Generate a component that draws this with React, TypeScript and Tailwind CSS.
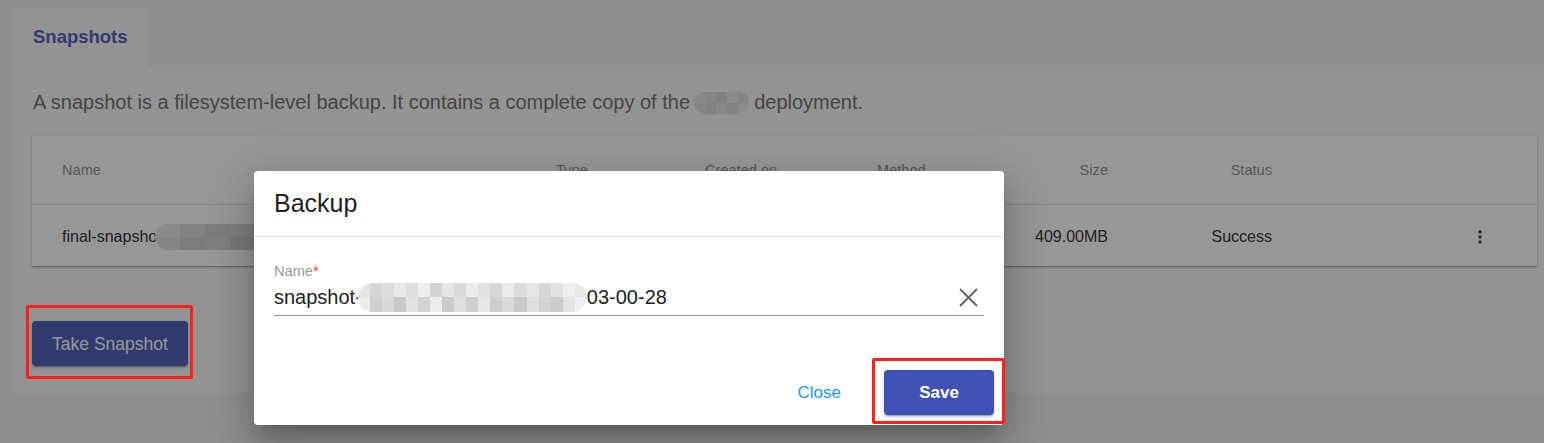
import React from "react";

const descBlur = [
  ["bg-[#e2e2e2]", "bg-[#dadada]", "bg-[#d2d2d2]", "bg-[#e6e6e6]", "bg-[#dcdcdc]"],
  ["bg-[#dedede]", "bg-[#d6d6d6]", "bg-[#e0e0e0]", "bg-[#d8d8d8]", "bg-[#e8e8e8]"],
];

const rowBlur = [
  ["bg-[#e4e4e4]", "bg-[#d8d8d8]", "bg-[#cfcfcf]", "bg-[#d6d6d6]", "bg-[#e0e0e0]", "bg-[#d2d2d2]", "bg-[#dcdcdc]", "bg-[#e2e2e2]"],
  ["bg-[#dcdcdc]", "bg-[#cccccc]", "bg-[#d4d4d4]", "bg-[#c8c8c8]", "bg-[#d8d8d8]", "bg-[#cdcdcd]", "bg-[#d6d6d6]", "bg-[#dadada]"],
];

const inputBlur = [
  [
    "bg-[#e6e6e6]", "bg-[#d6d6d6]", "bg-[#dcdcdc]", "bg-[#e8e8e8]", "bg-[#dedede]", "bg-[#eeeeee]",
    "bg-[#d4d4d4]", "bg-[#e4e4e4]", "bg-[#dadada]", "bg-[#ececec]", "bg-[#e0e0e0]", "bg-[#d8d8d8]",
    "bg-[#eaeaea]", "bg-[#dcdcdc]", "bg-[#e6e6e6]", "bg-[#d6d6d6]", "bg-[#e2e2e2]", "bg-[#eeeeee]", "bg-[#e8e8e8]",
  ],
  [
    "bg-[#ececec]", "bg-[#cfcfcf]", "bg-[#d8d8d8]", "bg-[#c8c8c8]", "bg-[#e2e2e2]", "bg-[#d4d4d4]",
    "bg-[#ececec]", "bg-[#cacaca]", "bg-[#dedede]", "bg-[#d0d0d0]", "bg-[#e6e6e6]", "bg-[#cdcdcd]",
    "bg-[#dadada]", "bg-[#c9c9c9]", "bg-[#dedede]", "bg-[#d2d2d2]", "bg-[#cccccc]", "bg-[#e4e4e4]", "bg-[#f0f0f0]",
  ],
];

// pixelated redaction block, as in the source screenshot
function Redacted({ cells, className }: { cells: string[][]; className: string }) {
  return (
    <span className={`inline-flex flex-col overflow-hidden rounded-full align-middle blur-[0.6px] ${className}`}>
      {cells.map((row, i) => (
        <span key={i} className="flex flex-1">
          {row.map((c, j) => (
            <span key={j} className={`flex-1 ${c}`} />
          ))}
        </span>
      ))}
    </span>
  );
}

function MoreVert() {
  return (
    <svg width="20" height="20" viewBox="0 0 24 24" fill="#333">
      <path d="M12 8c1.1 0 2-.9 2-2s-.9-2-2-2-2 .9-2 2 .9 2 2 2zm0 2c-1.1 0-2 .9-2 2s.9 2 2 2 2-.9 2-2-.9-2-2-2zm0 6c-1.1 0-2 .9-2 2s.9 2 2 2 2-.9 2-2-.9-2-2-2z" />
    </svg>
  );
}

export default function App() {
  const cols = "grid grid-cols-[494px_149px_172px_140px_91px_164px_1fr] items-center pl-[30px]";

  return (
    <div className="relative min-h-screen overflow-hidden bg-[#efefef] pt-[8px] pl-[12px] font-['Liberation_Sans',Arial,sans-serif]">
      {/* tab */}
      <div className="flex h-[58px] w-[136px] items-center bg-[#f8f8f8] pl-[21px]">
        <span className="text-[18.5px] font-bold text-[#3f51b5]">Snapshots</span>
      </div>

      {/* panel */}
      <div className="bg-[#f8f8f8] pb-[27px] pl-[20px] pr-[7px]">
        <p className="pl-[1px] pt-[24px] text-[20px] leading-[24px] text-[#666]">
          A snapshot is a filesystem-level backup. It contains a complete copy of the{" "}
          <Redacted cells={descBlur} className="-mt-[2px] -ml-[2px] h-[22px] w-[55px]" /> deployment.
        </p>

        <div className="mt-[22px] bg-white shadow-[0_1px_3px_rgba(0,0,0,0.2),0_1px_1px_rgba(0,0,0,0.14),0_2px_1px_-1px_rgba(0,0,0,0.12)]">
          <div className={`${cols} h-[69px] border-b border-[#e0e0e0] pt-[2px] text-[14.6px] text-[#888]`}>
            <span>Name</span>
            <span>Type</span>
            <span>Created on</span>
            <span>Method</span>
            <span className="text-right">Size</span>
            <span className="text-right">Status</span>
            <span />
          </div>
          <div className={`${cols} h-[61px] pt-[2px] text-[16px] text-[#222]`}>
            <span className="flex items-center">
              final-snapsho
              <Redacted cells={rowBlur} className="-ml-[2px] h-[26px] w-[200px]" />
            </span>
            <span>Full</span>
            <span>2023-03-00</span>
            <span>Manual</span>
            <span className="text-right">409.00MB</span>
            <span className="text-right">Success</span>
            <span className="flex justify-end pr-[47px]">
              <MoreVert />
            </span>
          </div>
        </div>

        <button className="mt-[55px] h-[45px] w-[156px] rounded-[4px] bg-[#3f51b5] pt-[1px] text-[17.5px] text-white shadow-[0_3px_1px_-2px_rgba(0,0,0,0.2),0_2px_2px_rgba(0,0,0,0.14),0_1px_5px_rgba(0,0,0,0.12)]">
          Take Snapshot
        </button>
      </div>

      {/* backdrop */}
      <div className="absolute inset-0 bg-[#22222278]" />

      {/* dialog */}
      <div className="absolute left-[254px] top-[171px] flex h-[254px] w-[750px] flex-col rounded-[4px] bg-white shadow-[0_11px_15px_-7px_rgba(0,0,0,0.2),0_24px_38px_3px_rgba(0,0,0,0.14),0_9px_46px_8px_rgba(0,0,0,0.12)]">
        <div className="flex h-[66px] items-center border-b border-[#e0e0e0] px-[20px] pt-[1px]">
          <h2 className="text-[25px] text-[#222]">Backup</h2>
        </div>
        <div className="px-[20px] pt-[25px]">
          <div className="text-[14.6px] leading-[18px] text-[#9a9a9a]">
            Name<span className="text-[#f44336]">*</span>
          </div>
          <div className="mt-[3px] flex h-[33px] items-center border-b border-[#949494] pb-[4px]">
            <span className="flex flex-1 items-center text-[20px] text-[#222]">
              snapshot-
              <Redacted cells={inputBlur} className="-ml-[4px] h-[29px] w-[229px]" />
              03-00-28
            </span>
            <svg width="19" height="19" viewBox="0 0 19 19" className="mr-[6px]">
              <path d="M1 1L18 18M18 1L1 18" stroke="#666" strokeWidth="2" />
            </svg>
          </div>
        </div>
        <div className="mt-auto flex items-center justify-end pb-[10px] pr-[10px]">
          <button className="mr-[43px] text-[17px] text-[#2196f3]">Close</button>
          <button className="h-[45px] w-[110px] rounded-[4px] bg-[#3f51b5] text-[17px] font-bold text-white shadow-[0_3px_1px_-2px_rgba(0,0,0,0.2),0_2px_2px_rgba(0,0,0,0.14),0_1px_5px_rgba(0,0,0,0.12)]">
            Save
          </button>
        </div>
      </div>

      {/* screenshot annotations */}
      <div className="absolute left-[26px] top-[305px] h-[74px] w-[167px] rounded-[2px] border-[3px] border-[#ff1f1f]" />
      <div className="absolute left-[872px] top-[358px] h-[66px] w-[133px] rounded-[2px] border-[3px] border-[#ff1f1f]" />
    </div>
  );
}
